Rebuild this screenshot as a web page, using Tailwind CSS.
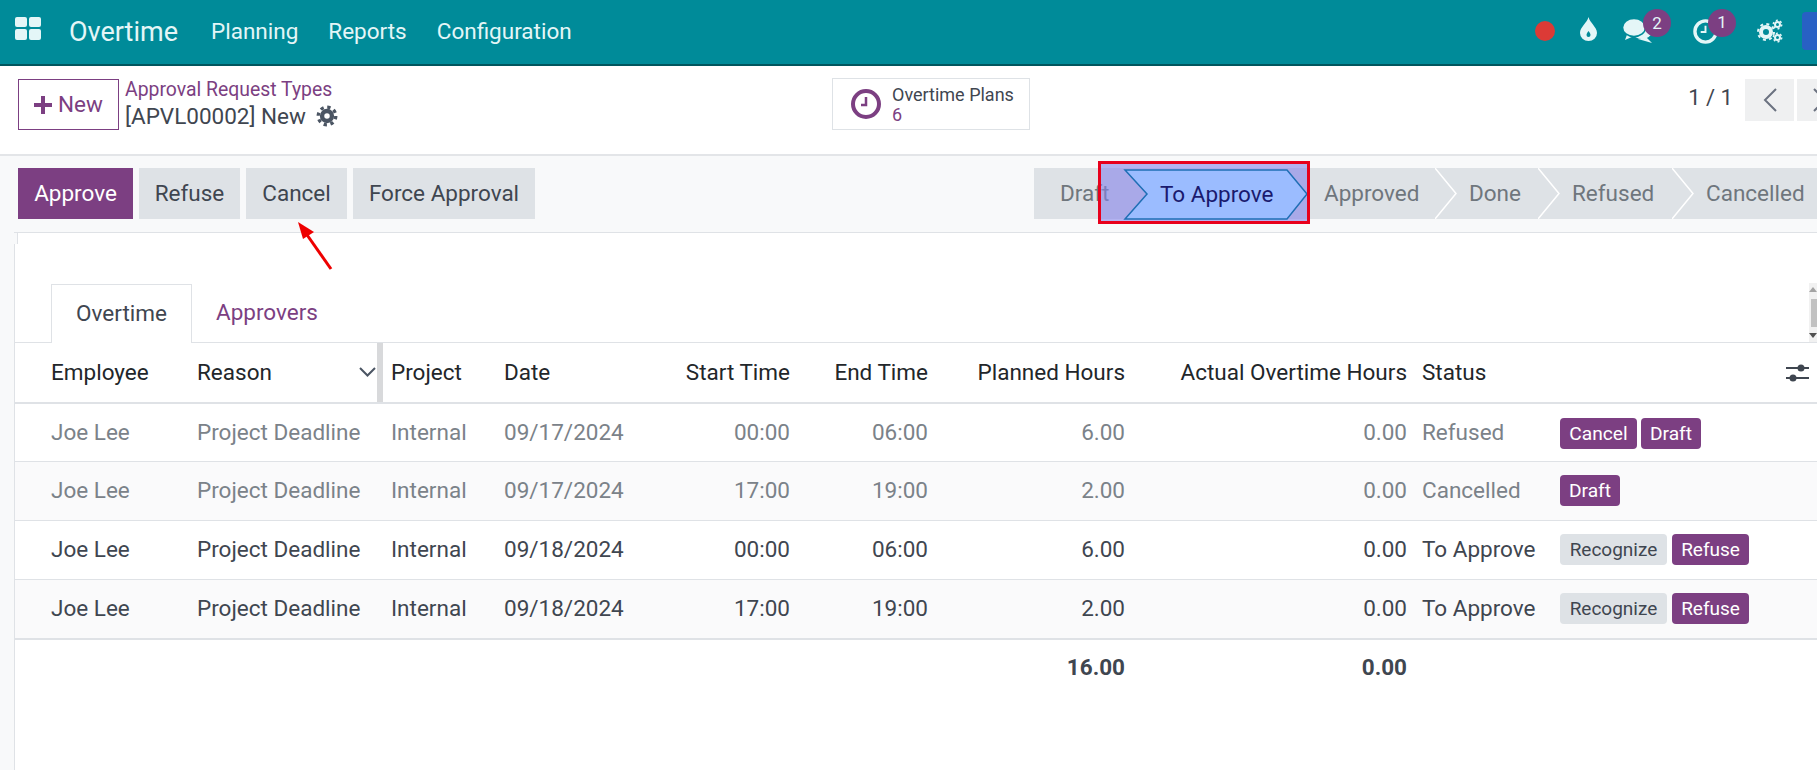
<!DOCTYPE html>
<html lang="en">
<head>
  <meta charset="UTF-8">
  <title>Overtime</title>
  <script src="https://cdn.jsdelivr.net/npm/@tailwindcss/browser@4"></script>
</head>
<body class="relative flex flex-col w-[1817px] h-[770px] overflow-hidden bg-[#f8f9fa] font-['Roboto',sans-serif] text-[22.5px] text-[#3f4650]">
  <!-- top bar -->
  <header class="flex items-center shrink-0 h-[66px] pl-[15px] bg-[#008b99] border-b-2 border-[#00565e] text-[#e4f6f7]">
    <svg class="w-[27px] h-[24px] -mt-[6px]" viewBox="0 0 27 24" fill="#e4f6f7">
      <rect x="0" y="0" width="12" height="10" rx="2"/><rect x="14" y="0" width="12" height="10" rx="2"/>
      <rect x="0" y="12" width="12" height="11" rx="2"/><rect x="14" y="12" width="12" height="11" rx="2"/>
    </svg>
    <span class="ml-[27px] text-[27px]">Overtime</span>
    <nav class="flex ml-[33px] gap-[30px] text-[22.500px]">
      <a>Planning</a><a>Reports</a><a>Configuration</a>
    </nav>
    <div class="flex items-center ml-auto -mt-[2px]">
      <span class="w-[20px] h-[20px] rounded-full bg-[#dc3a36]"></span>
      <svg class="w-[17px] h-[24px] ml-[25px] -mt-[4px]" viewBox="0 0 17 24"><path fill="#e4f6f7" fill-rule="evenodd" d="M8.500 0C10 6 17 10 17 16a8.500 8 0 0 1-17 0C0 10 7 6 8.500 0ZM8.500 14c-1 1.500-2 2.500-2 4a2 2 0 0 0 4 0c0-1.500-1-2.500-2-4Z"/></svg>
      <div class="relative w-[29px] h-[24px] ml-[26px]">
        <svg class="w-[29px] h-[24px]" viewBox="0 0 29 24">
          <ellipse cx="19" cy="13" rx="9.500" ry="7" fill="#e4f6f7"/><path d="M23 18 29 24 15 20Z" fill="#e4f6f7"/>
          <path d="M5 13 2 21 11 17Z" fill="#e4f6f7"/>
          <ellipse cx="11" cy="8.500" rx="11.500" ry="9" fill="#e4f6f7" stroke="#008b99" stroke-width="1.500"/>
        </svg>
        <span class="absolute -top-[10px] left-[20px] flex items-center justify-center w-[28px] h-[28px] rounded-full bg-[#7c3f82] text-[17px] leading-none">2</span>
      </div>
      <div class="relative w-[25px] h-[25px] ml-[41px]">
        <svg class="w-[25px] h-[25px]" viewBox="0 0 26 26" fill="none" stroke="#e4f6f7"><circle cx="13" cy="13" r="11" stroke-width="3.500"/><path d="M13 7v6.500H8" stroke-width="2"/></svg>
        <span class="absolute -top-[10px] left-[15px] flex items-center justify-center w-[28px] h-[28px] rounded-full bg-[#7c3f82] text-[17px] leading-none">1</span>
      </div>
      <svg class="w-[26px] h-[24px] ml-[39px]" viewBox="0 0 26 24" fill="none" stroke="#e4f6f7">
        <circle cx="9" cy="13" r="5" stroke-width="4"/><circle cx="9" cy="13" r="8" stroke-width="2" stroke-dasharray="3 3.300"/>
        <circle cx="20.500" cy="5.500" r="2.500" stroke-width="2"/><circle cx="20.500" cy="5.500" r="4.200" stroke-width="1.500" stroke-dasharray="2 2.400"/>
        <circle cx="20.500" cy="18.500" r="2.500" stroke-width="2"/><circle cx="20.500" cy="18.500" r="4.200" stroke-width="1.500" stroke-dasharray="2 2.400"/>
      </svg>
      <span class="w-[15px] h-[38px] ml-[19px] rounded-l-[4px] bg-[#2860c4]"></span>
    </div>
  </header>

  <!-- control panel -->
  <div class="flex shrink-0 h-[90px] pl-[18px] pt-[13px] bg-white border-b-2 border-[#e3e5e8]">
    <button class="flex items-center justify-center gap-[6px] w-[101px] h-[51px] border border-[#7c3f82] text-[#7c3f82]">
      <svg class="w-[18px] h-[18px]" viewBox="0 0 18 18" fill="#7c3f82"><path d="M7 0h4v7h7v4h-7v7H7v-7H0V7h7Z"/></svg>
      New
    </button>
    <div class="w-[220px] ml-[6px] -mt-[1px] whitespace-nowrap">
      <div class="text-[#7c3f82] text-[19.400px] leading-[24px]">Approval Request Types</div>
      <div class="flex items-center leading-[28px]">[APVL00002] New
        <svg class="w-[22px] h-[22px] ml-[10px]" viewBox="0 0 20 20" fill="none" stroke="#4b5563"><circle cx="10" cy="10" r="4.500" stroke-width="4"/><circle cx="10" cy="10" r="8" stroke-width="3" stroke-dasharray="3 3.280"/></svg>
      </div>
    </div>
    <button class="flex items-center w-[198px] h-[52px] ml-[487px] -mt-[1px] pl-[18px] border border-[#dee2e6] text-left">
      <svg class="w-[30px] h-[30px] shrink-0" viewBox="0 0 30 30" fill="none" stroke="#7c3f82"><circle cx="15" cy="15" r="13" stroke-width="4"/><path d="M15 8v8H10" stroke-width="2.500"/></svg>
      <span class="ml-[11px] pt-[2px] text-[18px] leading-[20px]">Overtime Plans<br><span class="text-[#7c3f82]">6</span></span>
    </button>
    <div class="flex h-[42px] ml-auto">
      <span class="mr-[12px] text-[22px] leading-[38px]">1 / 1</span>
      <span class="flex items-center justify-center w-[49px] bg-[#eff0f1]">
        <svg class="w-[14px] h-[24px]" viewBox="0 0 14 24" fill="none" stroke="#6b7280" stroke-width="2"><path d="M13 1 2 12l11 11"/></svg>
      </span>
      <span class="flex items-center w-[20px] ml-[3px] pl-[16px] overflow-hidden bg-[#eff0f1]">
        <svg class="w-[14px] h-[24px] shrink-0" viewBox="0 0 14 24" fill="none" stroke="#6b7280" stroke-width="2"><path d="m1 1 11 11L1 23"/></svg>
      </span>
    </div>
  </div>

  <!-- action bar and status bar -->
  <div class="flex shrink-0 h-[76px] pt-[12px] pl-[18px]">
    <div class="flex gap-[6px] h-[51px]">
      <button class="w-[115px] bg-[#7c3f82] text-white">Approve</button>
      <button class="w-[101px] bg-[#dee2e6]">Refuse</button>
      <button class="w-[101px] bg-[#dee2e6]">Cancel</button>
      <button class="w-[182px] bg-[#dee2e6]">Force Approval</button>
    </div>
    <div class="flex items-center h-[51px] ml-[499px] w-[784px] bg-[#dee2e6] text-[#6f767d]">
      <span class="w-[290px] pl-[26px]">Draft</span>
      <span class="relative w-[145px] h-full leading-[51px]">Approved
        <svg class="absolute right-[12px] top-0 w-[22px] h-[51px]" viewBox="0 0 22 51" fill="none" stroke="#fff" stroke-width="1.500"><path d="M0 0 21 25.500 0 51"/></svg>
      </span>
      <span class="relative w-[103px] h-full leading-[51px]">Done
        <svg class="absolute right-[12px] top-0 w-[22px] h-[51px]" viewBox="0 0 22 51" fill="none" stroke="#fff" stroke-width="1.500"><path d="M0 0 21 25.500 0 51"/></svg>
      </span>
      <span class="relative w-[134px] h-full leading-[51px]">Refused
        <svg class="absolute right-[12px] top-0 w-[22px] h-[51px]" viewBox="0 0 22 51" fill="none" stroke="#fff" stroke-width="1.500"><path d="M0 0 21 25.500 0 51"/></svg>
      </span>
      <span>Cancelled</span>
    </div>
  </div>

  <!-- sheet -->
  <main class="relative flex-1 ml-[14px] bg-white border-l border-t border-[#dfe2e6]">
    <span class="absolute -left-px top-0 w-[4px] h-[11px] bg-[#f8f9fa] border-r border-[#dfe2e6]"></span>
    <div class="flex items-end h-[110px] border-b border-[#dfe2e6]">
      <div class="flex items-center justify-center w-[141px] h-[59px] ml-[36px] -mb-px bg-white border border-b-0 border-[#dfe2e6]">Overtime</div>
      <div class="ml-[24px] h-[58px] mb-[1px] leading-[58px] text-[#7c3f82]">Approvers</div>
      <div class="flex flex-col items-center justify-between w-[8px] h-[59px] ml-auto bg-[#f1f1f1]">
        <span class="w-0 h-0 mt-[4px] border-x-[4px] border-b-[5px] border-x-transparent border-b-[#a3a3a3]"></span>
        <span class="w-[6px] h-[28px] ml-[2px] bg-[#c1c1c1]"></span>
        <span class="w-0 h-0 mb-[4px] border-x-[4px] border-t-[5px] border-x-transparent border-t-[#505050]"></span>
      </div>
    </div>
    <table class="w-full table-fixed border-collapse">
      <colgroup>
        <col class="w-[182px]"><col class="w-[186px]"><col class="w-[121px]"><col class="w-[146px]"><col class="w-[152px]">
        <col class="w-[138px]"><col class="w-[197px]"><col class="w-[285px]"><col class="w-[138px]"><col>
      </colgroup>
      <thead class="text-[#22262a]">
        <tr class="h-[60px] border-b-2 border-[#dfe2e6]">
          <th class="pl-[36px] font-normal text-left">Employee</th>
          <th class="relative font-normal text-left">Reason
            <svg class="absolute right-[7px] top-[24px] w-[17px] h-[10px]" viewBox="0 0 17 10" fill="none" stroke="#4b5563" stroke-width="2"><path d="m1 1 7.500 7.500L16 1"/></svg>
            <span class="absolute right-0 top-0 w-[6px] h-full bg-[#d8d9db]"></span>
          </th>
          <th class="pl-[8px] font-normal text-left">Project</th>
          <th class="font-normal text-left">Date</th>
          <th class="pr-[12px] font-normal text-right">Start Time</th>
          <th class="pr-[12px] font-normal text-right">End Time</th>
          <th class="pr-[12px] font-normal text-right">Planned Hours</th>
          <th class="pr-[15px] font-normal text-right">Actual Overtime Hours</th>
          <th class="font-normal text-left">Status</th>
          <th class="relative">
            <svg class="absolute right-[8px] top-[18px] w-[23px] h-[24px]" viewBox="0 0 23 24" fill="#3f4650" stroke="#3f4650" stroke-width="2"><path d="M0 7h23M0 17h23"/><circle cx="15" cy="7" r="2.500"/><circle cx="7" cy="17" r="2.500"/></svg>
          </th>
        </tr>
      </thead>
      <tbody>
        <tr class="h-[58px] border-b border-[#dfe2e6] text-[#7b8289] [&_td]:pt-[2px]">
          <td class="pl-[36px]">Joe Lee</td><td>Project Deadline</td><td class="pl-[8px]">Internal</td><td>09/17/2024</td>
          <td class="pr-[12px] text-right">00:00</td><td class="pr-[12px] text-right">06:00</td><td class="pr-[12px] text-right">6.00</td><td class="pr-[15px] text-right">0.00</td>
          <td>Refused</td>
          <td><span class="flex gap-[4px] text-[19.200px] leading-[31px]"><button class="w-[77px] rounded-[4px] bg-[#7c3f82] text-white">Cancel</button><button class="w-[60px] rounded-[4px] bg-[#7c3f82] text-white">Draft</button></span></td>
        </tr>
        <tr class="h-[59px] border-b border-[#dfe2e6] bg-[#fafafb] text-[#7b8289]">
          <td class="pl-[36px]">Joe Lee</td><td>Project Deadline</td><td class="pl-[8px]">Internal</td><td>09/17/2024</td>
          <td class="pr-[12px] text-right">17:00</td><td class="pr-[12px] text-right">19:00</td><td class="pr-[12px] text-right">2.00</td><td class="pr-[15px] text-right">0.00</td>
          <td>Cancelled</td>
          <td><span class="flex text-[19.200px] leading-[31px]"><button class="w-[60px] rounded-[4px] bg-[#7c3f82] text-white">Draft</button></span></td>
        </tr>
        <tr class="h-[59px] border-b border-[#dfe2e6]">
          <td class="pl-[36px]">Joe Lee</td><td>Project Deadline</td><td class="pl-[8px]">Internal</td><td>09/18/2024</td>
          <td class="pr-[12px] text-right">00:00</td><td class="pr-[12px] text-right">06:00</td><td class="pr-[12px] text-right">6.00</td><td class="pr-[15px] text-right">0.00</td>
          <td>To Approve</td>
          <td><span class="flex gap-[5px] text-[19px] leading-[31px]"><button class="w-[107px] rounded-[4px] bg-[#dee2e6]">Recognize</button><button class="w-[77px] rounded-[4px] bg-[#7c3f82] text-white">Refuse</button></span></td>
        </tr>
        <tr class="h-[60px] border-b-2 border-[#dfe2e6] bg-[#fafafb]">
          <td class="pl-[36px]">Joe Lee</td><td>Project Deadline</td><td class="pl-[8px]">Internal</td><td>09/18/2024</td>
          <td class="pr-[12px] text-right">17:00</td><td class="pr-[12px] text-right">19:00</td><td class="pr-[12px] text-right">2.00</td><td class="pr-[15px] text-right">0.00</td>
          <td>To Approve</td>
          <td><span class="flex gap-[5px] text-[19px] leading-[31px]"><button class="w-[107px] rounded-[4px] bg-[#dee2e6]">Recognize</button><button class="w-[77px] rounded-[4px] bg-[#7c3f82] text-white">Refuse</button></span></td>
        </tr>
      </tbody>
      <tfoot class="font-bold">
        <tr class="h-[56px]">
          <td colspan="6"></td>
          <td class="pr-[12px] text-right">16.00</td>
          <td class="pr-[15px] text-right">0.00</td>
          <td colspan="2"></td>
        </tr>
      </tfoot>
    </table>
  </main>

  <!-- annotation drawn on top of the screenshot -->
  <svg class="absolute left-[1098px] top-[161px] w-[212px] h-[63px]" viewBox="0 0 212 63">
    <rect x="1" y="1" width="210" height="61" fill="#8683e9" fill-opacity="0.6"/>
    <path d="M27 9H189L209 33 189 58H27L49 33Z" fill="#9bbcff" stroke="#1f6fb5" stroke-width="1.500"/>
    <rect x="1.500" y="1.500" width="209" height="60" fill="none" stroke="#e8001c" stroke-width="3"/>
  </svg>
  <span class="absolute left-[1160px] top-[179px] text-[#1a1a6e] leading-[30px]">To Approve</span>
  <svg class="absolute left-[290px] top-[215px] w-[50px] h-[60px]" viewBox="0 0 50 60"><path d="M41 54 15 17" stroke="#e00" stroke-width="3"/><path d="M8 7 24 17 13 24Z" fill="#e00"/></svg>
</body>
</html>
